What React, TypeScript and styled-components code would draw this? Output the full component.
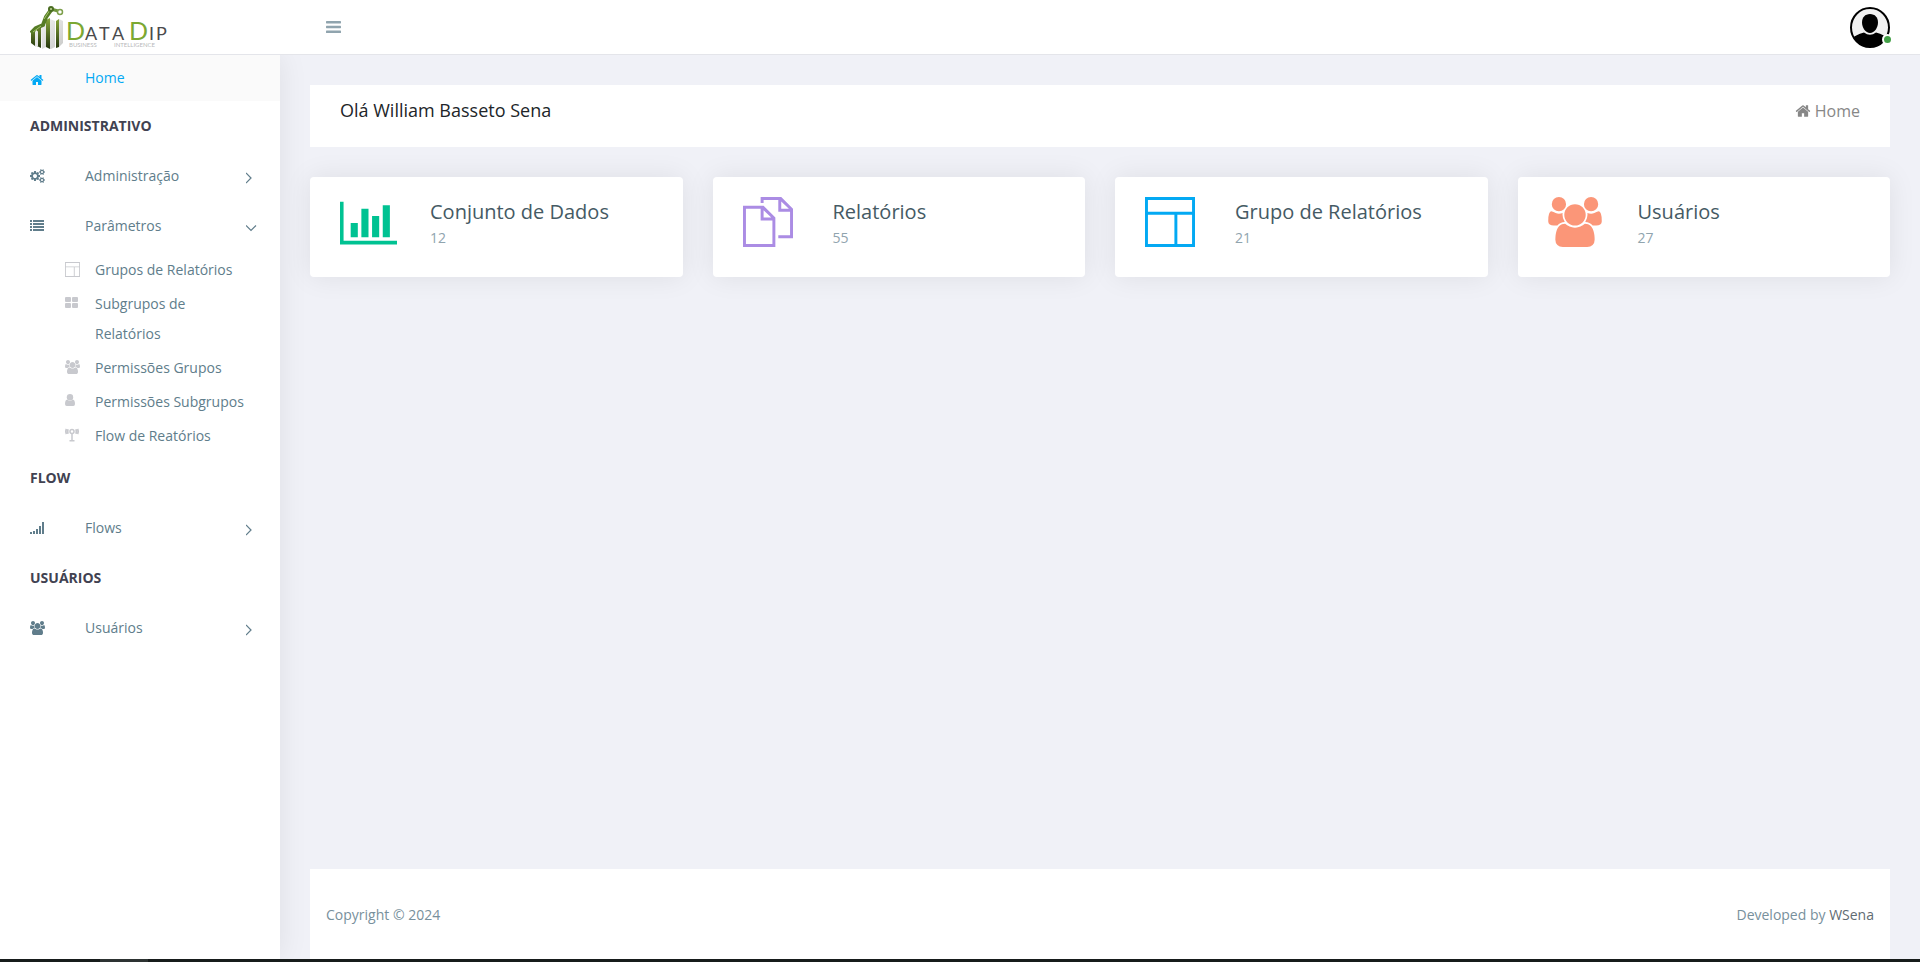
import React from "react";
import styled, { createGlobalStyle } from "styled-components";

const GlobalStyle = createGlobalStyle`
  *, *::before, *::after { box-sizing: border-box; }
  body {
    margin: 0;
    background: #f0f1f7;
    color: #607d8b;
    font-family: "Open Sans", "Noto Sans", sans-serif;
    font-size: 14px;
    line-height: 24px;
  }
  a { color: inherit; text-decoration: none; }
  ul { list-style: none; margin: 0; padding: 0; }
  svg { display: block; flex: none; }
`;

/* ---------- layout ---------- */

const Page = styled.div`
  display: flex;
  flex-direction: column;
  min-height: 100vh;
`;

const Header = styled.header`
  display: flex;
  align-items: center;
  height: 55px;
  padding: 0 30px;
  background: #fff;
  border-bottom: 1px solid #e4e5ea;
`;

const Brand = styled.a`
  width: 296px;
`;

const MenuToggle = styled.button`
  display: flex;
  padding: 0;
  border: 0;
  background: none;
  color: #90a4ae;
  cursor: pointer;
`;

const Profile = styled.button`
  position: relative;
  margin-left: auto;
  padding: 0;
  border: 0;
  background: none;
  cursor: pointer;
`;

const StatusDot = styled.span`
  position: absolute;
  right: -3px;
  bottom: 3px;
  width: 11px;
  height: 11px;
  border: 2px solid #fff;
  border-radius: 50%;
  background: #43a047;
`;

const Body = styled.div`
  display: flex;
  flex: 1;
`;

const Sidebar = styled.nav`
  flex: 0 0 280px;
  background: #fff;
  box-shadow: 0 0 28px rgba(0, 0, 0, 0.08);
  clip-path: inset(0 -40px 0 0);
`;

const Content = styled.div`
  display: flex;
  flex: 1;
  flex-direction: column;
  min-width: 0;
  padding: 30px 30px 0;
`;

const Taskbar = styled.div`
  display: flex;
  height: 3px;
  padding-left: 100px;
  background: #171c1b;
`;

const TaskbarItem = styled.span`
  width: 48px;
  background: #2d3332;
`;

/* ---------- sidebar ---------- */

const SectionTitle = styled.h2`
  margin: 0;
  padding: 0 30px;
  color: #414251;
  font-size: 14px;
  font-weight: 700;
  line-height: 50px;
`;

const MenuLink = styled.a<{ $active?: boolean }>`
  display: grid;
  grid-template-columns: 55px 1fr 12px;
  align-items: center;
  height: ${(p) => (p.$active ? 46 : 50)}px;
  padding: 0 22px 0 30px;
  color: ${(p) => (p.$active ? "#03a9f4" : "#607d8b")};
  background: ${(p) => (p.$active ? "#fafafa" : "transparent")};
`;

const IconSlot = styled.span<{ $low?: boolean }>`
  padding-top: ${(p) => (p.$low ? 4 : 0)}px;
`;

const SubMenu = styled.ul`
  padding: 2px 30px 0 65px;
`;

const SubLink = styled.a`
  display: flex;
  padding: 2px 0;
  line-height: 30px;
`;

const SubIcon = styled.span`
  flex: 0 0 30px;
  padding-top: 7px;
  color: #c8c9ce;
`;

/* ---------- content ---------- */

const TitleBar = styled.section`
  display: flex;
  justify-content: space-between;
  height: 62px;
  padding: 13px 30px;
  background: #fff;
`;

const Greeting = styled.h1`
  margin: 0;
  color: #212529;
  font-size: 18px;
  font-weight: 400;
  line-height: 24px;
`;

const Crumb = styled.a`
  display: flex;
  align-items: center;
  gap: 4px;
  height: 26px;
  color: #878787;
  font-size: 16px;
`;

const Cards = styled.section`
  display: grid;
  grid-template-columns: repeat(4, 1fr);
  gap: 30px;
  margin-top: 30px;
`;

const Card = styled.a`
  display: grid;
  grid-template-columns: 60px 1fr;
  column-gap: 30px;
  height: 100px;
  padding: 20px 30px;
  border-radius: 4px;
  background: #fff;
  box-shadow: 0 0 28px rgba(0, 0, 0, 0.08);
`;

const CardTitle = styled.h3`
  margin: 0;
  color: #455a64;
  font-size: 20px;
  font-weight: 400;
  line-height: 30px;
`;

const CardValue = styled.p`
  margin: 0;
  color: #90a4ae;
  line-height: 22px;
`;

const Footer = styled.footer`
  display: flex;
  align-items: center;
  justify-content: space-between;
  height: 90px;
  margin-top: auto;
  padding: 2px 16px 0;
  background: #fff;
  color: #78909c;
`;

const FooterLink = styled.a`
  color: #5f6b72;
`;

/* ---------- icons ---------- */

type IconProps = { size?: number; color?: string };

const HomeIcon = ({ size = 14 }: IconProps) => (
  <svg width={size} height={size} viewBox="0 0 1792 1792" fill="currentColor" aria-hidden="true">
    <path d="M1472 992v480q0 26-19 45t-45 19h-384v-384h-256v384h-384q-26 0-45-19t-19-45v-480q0-1 .5-3t.5-3l575-474 575 474q1 2 1 6zm223-69l-62 74q-8 9-21 11h-3q-13 0-21-7l-692-577-692 577q-12 8-24 7-13-2-21-11l-62-74q-8-10-7-23.500t11-21.500l719-599q32-26 76-26t76 26l244 204v-195q0-14 9-23t23-9h192q14 0 23 9t9 23v408l219 182q10 8 11 21.500t-7 23.500z" />
  </svg>
);

const CogsIcon = () => (
  <svg width="15" height="14" viewBox="0 0 1920 1792" fill="currentColor" aria-hidden="true">
    <path d="M896 896q0-106-75-181t-181-75-181 75-75 181 75 181 181 75 181-75 75-181zm768 512q0-52-38-90t-90-38-90 38-38 90q0 53 37.500 90.500t90.500 37.500 90.500-37.500 37.500-90.500zm0-1024q0-52-38-90t-90-38-90 38-38 90q0 53 37.500 90.500t90.500 37.500 90.500-37.500 37.500-90.500zm-384 421v185q0 10-7 19.500t-16 10.500l-155 24q-11 35-32 76 34 48 90 115 7 11 7 20 0 12-7 19-23 30-82.500 89.500t-78.500 59.500q-11 0-21-7l-115-90q-37 19-77 31-11 108-23 155-7 24-30 24h-186q-11 0-20-7.500t-10-17.500l-23-153q-34-10-75-31l-118 89q-7 7-20 7-11 0-21-8-144-133-144-160 0-9 7-19 10-14 41-53t47-61q-23-44-35-82l-152-24q-10-1-17-9.500t-7-19.500v-185q0-10 7-19.500t16-10.500l155-24q11-35 32-76-34-48-90-115-7-11-7-20 0-12 7-20 22-30 82-89t79-59q11 0 21 7l115 90q34-18 77-32 11-108 23-154 7-24 30-24h186q11 0 20 7.500t10 17.500l23 153q34 10 75 31l118-89q8-7 20-7 11 0 21 8 144 133 144 160 0 8-7 19-12 16-42 54t-45 60q23 48 34 82l152 23q10 2 17 10.500t7 19.500zm640 533v140q0 16-149 31-12 27-30 52 51 113 51 138 0 4-4 7-122 71-124 71-8 0-46-47t-52-68q-20 2-30 2t-30-2q-14 21-52 68t-46 47q-2 0-124-71-4-3-4-7 0-25 51-138-18-25-30-52-149-15-149-31v-140q0-16 149-31 13-29 30-52-51-113-51-138 0-4 4-7 4-2 35-20t59-34 30-16q8 0 46 46.500t52 67.500q20-2 30-2t30 2q51-71 92-112l6-2q4 0 124 70 4 3 4 7 0 25-51 138 17 23 30 52 149 15 149 31zm0-1024v140q0 16-149 31-12 27-30 52 51 113 51 138 0 4-4 7-122 71-124 71-8 0-46-47t-52-68q-20 2-30 2t-30-2q-14 21-52 68t-46 47q-2 0-124-71-4-3-4-7 0-25 51-138-18-25-30-52-149-15-149-31v-140q0-16 149-31 13-29 30-52-51-113-51-138 0-4 4-7 4-2 35-20t59-34 30-16q8 0 46 46.500t52 67.500q20-2 30-2t30 2q51-71 92-112l6-2q4 0 124 70 4 3 4 7 0 25-51 138 17 23 30 52 149 15 149 31z" />
  </svg>
);

const ListIcon = () => (
  <svg width="14" height="12" viewBox="0 0 14 12" fill="currentColor" shapeRendering="crispEdges" aria-hidden="true">
    <path d="M0 0h2v2H0zM3 0h11v2H3zM0 3h2v2H0zM3 3h11v2H3zM0 6h2v2H0zM3 6h11v2H3zM0 9h2v2H0zM3 9h11v2H3z" />
  </svg>
);

const SignalIcon = () => (
  <svg width="14" height="12" viewBox="0 0 14 12" fill="currentColor" shapeRendering="crispEdges" aria-hidden="true">
    <path d="M0 10h2v2H0zM3 9h2v3H3zM6 7h2v5H6zM9 4h2v8H9zM12 0h2v12h-2z" />
  </svg>
);

const UsersIcon = ({ size = 14, color = "currentColor" }: IconProps) => (
  <svg width={Math.round((size * 15) / 14)} height={size} viewBox="0 0 1920 1792" fill={color} aria-hidden="true">
    <path d="M593 896q-162 5-265 128h-134q-82 0-138-40.500t-56-118.500q0-353 124-353 6 0 43.500 21t97.500 42.500 119 21.500q67 0 133-23-5 37-5 66 0 139 81 256zm1071 637q0 120-73 189.500t-194 69.500h-874q-121 0-194-69.500t-73-189.500q0-53 3.500-103.500t14-109 26.500-108.500 43-97.500 62-81 85.500-53.500 111.500-20q10 0 43 21.500t73 48 107 48 135 21.500 135-21.500 107-48 73-48 43-21.500q61 0 111.500 20t85.500 53.500 62 81 43 97.500 26.500 108.500 14 109 3.500 103.500zm-1024-1277q0 106-75 181t-181 75-181-75-75-181 75-181 181-75 181 75 75 181zm704 384q0 159-112.500 271.500t-271.500 112.500-271.500-112.500-112.500-271.500 112.500-271.500 271.500-112.500 271.500 112.500 112.500 271.500zm576 225q0 78-56 118.500t-138 40.500h-134q-103-123-265-128 81-117 81-256 0-29-5-66 66 23 133 23 59 0 119-21.500t97.500-42.500 43.500-21q124 0 124 353zm-128-609q0 106-75 181t-181 75-181-75-75-181 75-181 181-75 181 75 75 181z" />
  </svg>
);

const UserIcon = () => (
  <svg width="10" height="14" viewBox="0 0 10 14" fill="currentColor" aria-hidden="true">
    <circle cx="5" cy="3.200" r="3.200" />
    <path d="M2.300 5.400Q5 8 7.700 5.400Q10 5.800 10 10Q10 12 8.300 12H1.700Q0 12 0 10Q0 5.800 2.300 5.400z" />
  </svg>
);

const GridIcon = () => (
  <svg width="13" height="13" viewBox="0 0 13 13" fill="currentColor" aria-hidden="true">
    <rect x="0" y="1" width="6" height="5" rx="1" />
    <rect x="7" y="1" width="6" height="5" rx="1" />
    <rect x="0" y="7" width="6" height="5" rx="1" />
    <rect x="7" y="7" width="6" height="5" rx="1" />
  </svg>
);

const AntennaIcon = () => (
  <svg width="14" height="14" viewBox="0 0 14 14" fill="none" stroke="currentColor" aria-hidden="true">
    <circle cx="7" cy="3.500" r="2" strokeWidth="1.500" />
    <path d="M7 5.500v7M4.500 12.800h5" strokeWidth="1.500" />
    <path d="M1.500 1Q.2 3.500 1.500 6M3.100 1.300Q2.300 3.500 3.100 5.700M12.500 1q1.300 2.500 0 5M10.900 1.300q.8 2.200 0 4.400" strokeWidth="1.700" />
  </svg>
);

const LayoutIcon = ({ size = 15, color = "currentColor" }: IconProps) => (
  <svg width={size} height={size} viewBox="0 0 17 17" fill={color} aria-hidden="true">
    <path d="M0 0v17h17V0zM16 1v4H1V1zM1 6h9v10H1zM11 16V6h5v10z" />
  </svg>
);

const FilesIcon = ({ size = 50, color }: IconProps) => (
  <svg width={size} height={size} viewBox="0 0 17 17" fill={color} aria-hidden="true">
    <path d="M13 0H6v2h1V1h5v4h4v8h-4v1h5V4zM13 1.500L15.600 4H13zM7 3H0v14h11V7zM7 4.500L9.600 7H7zM1 16V4h5v4h4v8z" />
  </svg>
);

const ChartIcon = ({ color }: IconProps) => (
  <svg width="57" height="52" viewBox="0 -36 2048 1864" fill={color} aria-hidden="true">
    <path d="M640 896v512h-256v-512h256zm384-512v1024h-256v-1024h256zm1024 1152v128h-2048v-1536h128v1408h1920zm-640-896v768h-256v-768h256zm384-384v1152h-256v-1152h256z" />
  </svg>
);

const Chevron = ({ open }: { open?: boolean }) => (
  <svg width="12" height="18" viewBox="0 0 12 18" fill="none" stroke="currentColor" strokeWidth="1.200" aria-hidden="true">
    <path d={open ? "M0 8.500l5 5 5-5" : "M0 6l5 5-5 5"} />
  </svg>
);

const BarsIcon = () => (
  <svg width="15" height="12" viewBox="0 0 15 12" fill="currentColor" aria-hidden="true">
    <rect y="0" width="15" height="2.400" rx=".6" />
    <rect y="4.800" width="15" height="2.400" rx=".6" />
    <rect y="9.600" width="15" height="2.400" rx=".6" />
  </svg>
);

const Avatar = () => (
  <svg width="40" height="41" viewBox="0 0 40 41" role="img" aria-label="Perfil">
    <clipPath id="avatar-disc">
      <ellipse cx="20" cy="20.500" rx="19" ry="19.500" />
    </clipPath>
    <ellipse cx="20" cy="20.500" rx="19" ry="19.500" fill="#f1f1f1" />
    <g clipPath="url(#avatar-disc)">
      <path d="M3 31Q5 28 14 25.500Q20 30 26 25.500Q35 28 37 31V41H3z" />
    </g>
    <path d="M20 7c5 0 8 3.500 8 8.500 0 5-3.500 10.500-8 10.500s-8-5.500-8-10.500C12 10.500 15 7 20 7z" />
    <ellipse cx="20" cy="20.500" rx="19" ry="19.500" fill="none" stroke="#000" strokeWidth="2" />
  </svg>
);

const Logo = () => (
  <svg width="140" height="44" viewBox="0 0 140 44" role="img" aria-label="DataDip Business Intelligence">
    <defs>
      <linearGradient id="bar-green" x1="0" y1="0" x2="0" y2="1">
        <stop offset="0" stopColor="#8aa83c" />
        <stop offset="1" stopColor="#23350c" />
      </linearGradient>
      <linearGradient id="bar-silver" x1="0" y1="0" x2="1" y2="1">
        <stop offset="0" stopColor="#f6f6f6" />
        <stop offset="1" stopColor="#c9cac8" />
      </linearGradient>
    </defs>
    <path d="M1 28l4-2v15l-4-3zM7 22l4-2v23l-4-2zM16 15l4-2v31l-4-2zM26 16l3-2v28l-3 1z" fill="url(#bar-green)" />
    <path d="M5 27l3-1v15l-3 1zM11 21l5-1v22l-4 2zM20 14l5 2v26l-4 2h-1zM29 14l4 2v22l-4 4z" fill="url(#bar-silver)" />
    <path d="M1 28l5-5 7-3 3-8 5-7" fill="none" stroke="#567c26" strokeWidth="4" strokeLinejoin="round" />
    <path d="M21 4l7 2" fill="none" stroke="#6f953a" strokeWidth="3" />
    <path d="M14 14l6-9M3 27l8-6" fill="none" stroke="#a5c56a" strokeWidth="1" />
    <circle cx="21" cy="4" r="3" fill="#4a6d22" />
    <circle cx="21" cy="4" r="1" fill="#c3d89b" />
    <circle cx="30" cy="7" r="2.500" fill="none" stroke="#7d9f4b" strokeWidth="1.500" />
    <g fontFamily="Lato, sans-serif">
      <g fontSize="25" fill="#7ba832">
        <text x="36" y="35">D</text>
        <text x="99" y="35">D</text>
      </g>
      <g fontSize="18" fill="#4a4a4c">
        <text x="55" y="35">A</text>
        <text x="69" y="35">T</text>
        <text x="82" y="35">A</text>
        <text x="119" y="35">I</text>
        <text x="126" y="35">P</text>
      </g>
      <g fontSize="6" fill="#b8b9bb">
        <text x="39" y="42">BUSINESS</text>
        <text x="84" y="42">INTELLIGENCE</text>
      </g>
    </g>
  </svg>
);

/* ---------- data ---------- */

const parameterLinks = [
  { label: "Grupos de Relatórios", icon: <LayoutIcon /> },
  { label: "Subgrupos de Relatórios", icon: <GridIcon /> },
  { label: "Permissões Grupos", icon: <UsersIcon /> },
  { label: "Permissões Subgrupos", icon: <UserIcon /> },
  { label: "Flow de Reatórios", icon: <AntennaIcon /> },
];

const cards = [
  { title: "Conjunto de Dados", value: 12, icon: <ChartIcon color="#00c292" /> },
  { title: "Relatórios", value: 55, icon: <FilesIcon color="#ab8ce4" /> },
  { title: "Grupo de Relatórios", value: 21, icon: <LayoutIcon size={50} color="#03a9f3" /> },
  { title: "Usuários", value: 27, icon: <UsersIcon size={50} color="#fb9678" /> },
];

type MenuItemProps = { icon: React.ReactNode; label: string; open?: boolean };

const MenuItem = ({ icon, label, open }: MenuItemProps) => (
  <MenuLink href="#" aria-expanded={!!open}>
    <IconSlot>{icon}</IconSlot>
    <span>{label}</span>
    <Chevron open={open} />
  </MenuLink>
);

export default function App() {
  return (
    <Page>
      <GlobalStyle />
      <Header>
        <Brand href="#">
          <Logo />
        </Brand>
        <MenuToggle type="button" aria-label="Menu">
          <BarsIcon />
        </MenuToggle>
        <Profile type="button" aria-label="Perfil">
          <Avatar />
          <StatusDot />
        </Profile>
      </Header>
      <Body>
        <Sidebar>
          <MenuLink href="#" $active>
            <IconSlot $low>
              <HomeIcon />
            </IconSlot>
            <span>Home</span>
          </MenuLink>
          <SectionTitle>ADMINISTRATIVO</SectionTitle>
          <MenuItem icon={<CogsIcon />} label="Administração" />
          <MenuItem icon={<ListIcon />} label="Parâmetros" open />
          <SubMenu>
            {parameterLinks.map((link) => (
              <li key={link.label}>
                <SubLink href="#">
                  <SubIcon>{link.icon}</SubIcon>
                  <span>{link.label}</span>
                </SubLink>
              </li>
            ))}
          </SubMenu>
          <SectionTitle>FLOW</SectionTitle>
          <MenuItem icon={<SignalIcon />} label="Flows" />
          <SectionTitle>USUÁRIOS</SectionTitle>
          <MenuItem icon={<UsersIcon />} label="Usuários" />
        </Sidebar>
        <Content>
          <TitleBar>
            <Greeting>Olá William Basseto Sena</Greeting>
            <Crumb href="#">
              <HomeIcon size={16} />
              Home
            </Crumb>
          </TitleBar>
          <Cards>
            {cards.map((card) => (
              <Card href="#" key={card.title}>
                {card.icon}
                <div>
                  <CardTitle>{card.title}</CardTitle>
                  <CardValue>{card.value}</CardValue>
                </div>
              </Card>
            ))}
          </Cards>
          <Footer>
            <span>Copyright © 2024</span>
            <span>
              Developed by <FooterLink href="#">WSena</FooterLink>
            </span>
          </Footer>
        </Content>
      </Body>
      <Taskbar>
        <TaskbarItem />
      </Taskbar>
    </Page>
  );
}
